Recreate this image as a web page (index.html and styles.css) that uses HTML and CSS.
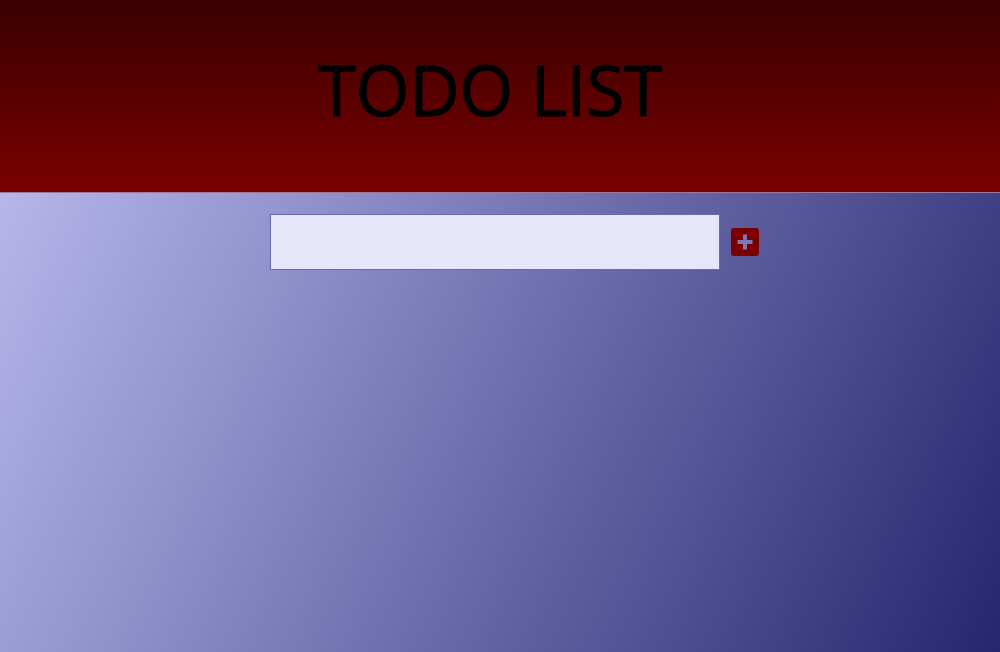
FILE: index.html
```html
<!DOCTYPE html>
<html>
<head>
<meta charset="utf-8">
<link rel="stylesheet" href="styles.css">
</head>
<body>
<header class="header">
  <h1 class="title">TODO LIST</h1>
</header>
<main class="main">
  <form class="add-form">
    <input class="todo-input" type="text">
    <button class="add-btn" type="button" aria-label="Add">
      <svg width="28" height="28" viewBox="0 0 28 28">
        <rect x="12" y="6.5" width="4" height="15" fill="#7a7ab8"/>
        <rect x="6.5" y="12" width="15" height="4" fill="#7a7ab8"/>
      </svg>
    </button>
  </form>
</main>
</body>
</html>
```
FILE: styles.css
```css
html, body {
  margin: 0;
  padding: 0;
}
body {
  font-family: "Open Sans", "Noto Sans", sans-serif;
  background: #6e6eaa;
}
.header {
  height: 193px;
  box-sizing: border-box;
  background: linear-gradient(to bottom, #3a0000, #7a0000);
  display: flex;
  align-items: center;
  justify-content: center;
  padding: 0 20px 14px 0;
  border-bottom: 1px solid #9a7a9a;
}
.title {
  margin: 0;
  font-size: 69px;
  font-weight: 400;
  color: #000;
  letter-spacing: 0;
  -webkit-text-stroke: 1.2px #000;
}
.main {
  height: 459px;
  box-sizing: border-box;
  padding: 21px 0 0 270px;
  background: linear-gradient(115deg, #b6b6ec 0%, #26266e 100%);
}
.add-form {
  display: flex;
  align-items: center;
  gap: 11px;
}
.todo-input {
  width: 450px;
  height: 56px;
  box-sizing: border-box;
  border: 1px solid #6a6aa8;
  background: #e6e6fa;
  outline: none;
  margin: 0;
}
.add-btn {
  width: 28px;
  height: 28px;
  padding: 0;
  border: none;
  border-radius: 3px;
  background: #7a0000;
  display: flex;
  cursor: pointer;
}
```
